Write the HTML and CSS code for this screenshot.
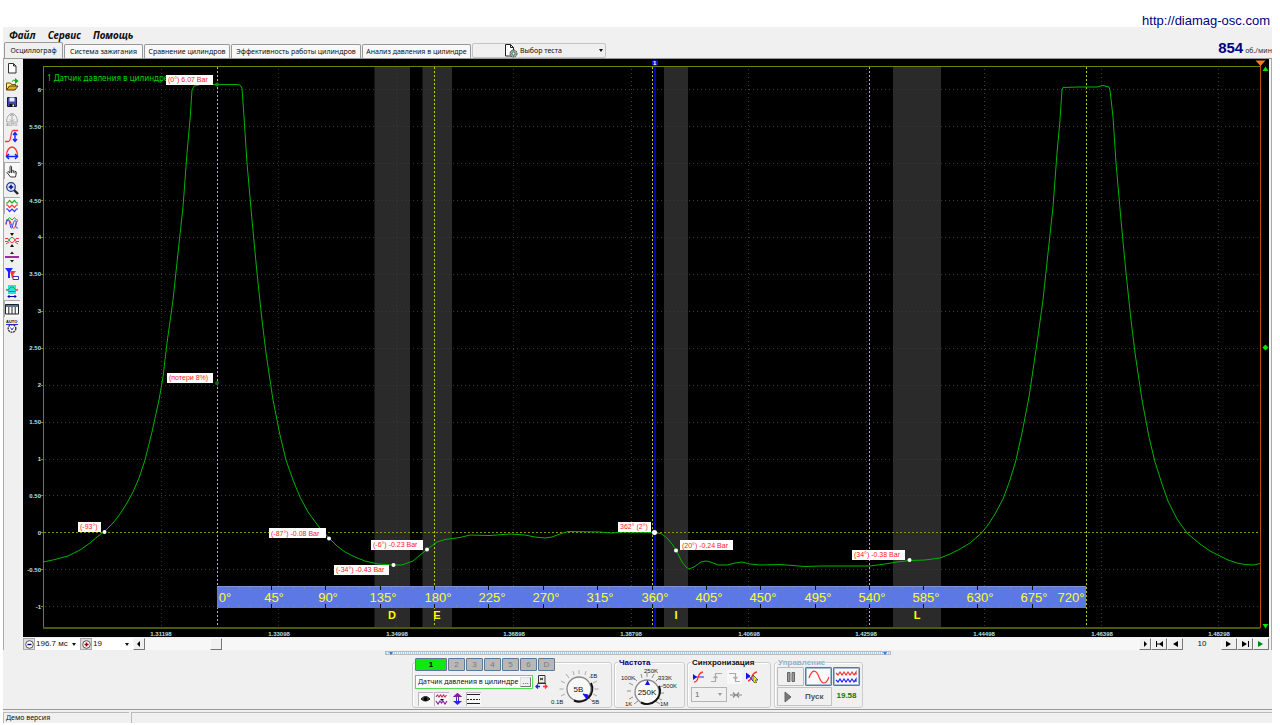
FILE: index.html
```html
<!DOCTYPE html>
<html lang="ru">
<head>
<meta charset="utf-8">
<title>Осциллограф</title>
<link rel="stylesheet" href="styles.css">
</head>
<body>
<header class="site"><a href="#">http://diamag-osc.com</a></header>
<div class="window">
  <nav class="menu">
    <button>Файл</button><button>Сервис</button><button>Помощь</button>
  </nav>
  <div class="tabs">
    <button class="tab tab-on">Осциллограф</button>
    <button class="tab tab-m">Система зажигания</button>
    <button class="tab tab-l">Сравнение цилиндров</button>
    <button class="tab tab-xxl">Эффективность работы цилиндров</button>
    <button class="tab tab-xl">Анализ давления в цилиндре</button>
    <button class="test-pick">
      <svg width="14" height="14" viewBox="0 0 14 14"><path d="M1.500 .5h5l3 3v8.500h-8zM6.500 .5v3h3" fill="#fff" stroke="#222"/><circle cx="9.500" cy="9.500" r="3.500" fill="#9db59d" stroke="#344" stroke-dasharray="1.500 .8"/><circle cx="9.500" cy="9.500" r="1.500" fill="#dfe" stroke="#344" stroke-width=".7"/></svg>
      <span>Выбор теста</span><i class="arrow"></i>
    </button>
    <div class="rpm"><b>854</b><span>об./мин</span></div>
  </div>

  <div class="main">
    <div class="toolbar">
      <button aria-label="Новый"><svg viewBox="0 0 14 14"><path d="M3.500 2.500h5l2.500 2.500v7h-7.500zM8.500 2.500v2.500h2.500" fill="#fff" stroke="#333"/></svg></button>
      <button aria-label="Открыть"><svg viewBox="0 0 14 14"><path d="M1.500 12V5h4l1 1.500h4V8" fill="#ffe98a" stroke="#6a5200"/><path d="M1.500 12l3-4h8.500l-3 4z" fill="#e8b020" stroke="#4a3a00"/><path d="M7 3.500q1.500-2 3-1" fill="none" stroke="#0a0"/><path d="M10 0l3.500 3-3.500 3z" fill="#0a0"/></svg></button>
      <button aria-label="Сохранить"><svg viewBox="0 0 14 14"><path d="M2.500 2.500h9v9h-9z" fill="#4048a8" stroke="#181850"/><path d="M4.500 2.500h5v4h-5z" fill="#e8eefc"/><path d="M4.500 9h5v3h-5z" fill="#111"/><path d="M7.500 9.500h1.500v2h-1.500z" fill="#fff"/></svg></button>
      <button aria-label="Авто"><svg viewBox="0 0 14 14"><path d="M1.500 10a5.500 8.500 0 0 1 11 0zM7 2v7M5 4l2-2 2 2M5 7.500l2 2 2-2" fill="none" stroke="#aaa"/><text x="1" y="14" class="tiny" fill="#999">AUTO</text></svg></button>
      <button aria-label="Амплитуда"><svg viewBox="0 0 14 14"><path d="M0 12.500h3c4 0 2-10 5-11h5" fill="none" stroke="#f33" stroke-width="1.300"/><path d="M10 4v8M8 6l2-2.500L12 6M8 10l2 2.500 2-2.500" fill="none" stroke="#12f" stroke-width="1.400"/></svg></button>
      <button aria-label="Период"><svg viewBox="0 0 14 14"><path d="M1.500 10C1.500 4 4.500 1 7 1S12.500 4 12.500 10" fill="none" stroke="#f33" stroke-width="1.300"/><path d="M2 10.500h10M4 8l-2.500 2.500L4 13M10 8l2.500 2.500L10 13" fill="none" stroke="#12f" stroke-width="1.400"/></svg></button>
      <button class="on" aria-label="Рука"><svg viewBox="0 0 14 14"><path d="M5.500 13L2 8.500l1-1 2 1.500V2.500q.7-1 1.500 0V7q.8-1.500 1.700 0 .8-1 1.700.5 1.300-.5 1.500 1L10.500 13zM6.500 7v2M8.200 7v2M10 7.500v2" fill="#fff" stroke="#222" stroke-width=".9"/></svg></button>
      <button aria-label="Лупа"><svg viewBox="0 0 14 14"><path d="M9 9l4 4" stroke="#222" stroke-width="2.400"/><circle cx="6" cy="6" r="4.300" fill="#d8e8ff" stroke="#223a70" stroke-width="1.200"/><path d="M3.800 6h4.400M6 3.800v4.400" stroke="#00a" stroke-width="1.500"/></svg></button>
      <button class="on" aria-label="Все каналы"><svg viewBox="0 0 14 14"><g fill="none" stroke-width="1.200"><path d="M1 4h1.500l2-2.500L7 4l2.500-2.500L11.500 4H13" stroke="#2a2"/><path d="M1 6h1.500l2 2.500L7 6l2.500 2.500 2-2.500H13" stroke="#f33"/><path d="M1 10h1.500l2 2.500L7 10l2.500 2.500 2-2.500H13" stroke="#33f"/></g></svg></button>
      <button aria-label="Наложение"><svg viewBox="0 0 14 14"><g fill="none"><path d="M1 4h1.500l2-2.500L7 4l2.500-2.500L11.500 4H13" stroke="#2a2"/><path d="M1 9C2 3 4 2 5.500 6s3 9 4.500 5 1-6 3-6" stroke="#f33"/><path d="M1 8c0-5 3-6 4 0s2 5 3 0 4-4 3 0 1 4 2 4" stroke="#33f"/></g></svg></button>
      <button aria-label="Сжатие"><svg viewBox="0 0 14 14"><g fill="none"><path d="M0 8.500h3l3-4h2l3 4h3" stroke="#2a2"/><path d="M0 5.500h3l3 4h2l3-4h3M1 11l3-2M13 11l-3-2" stroke="#f33"/></g><path d="M5 0h4L7 3zM5 14h4l-2-3z" fill="#111"/></svg></button>
      <button aria-label="Ноль"><svg viewBox="0 0 14 14"><path d="M0 6h14v2H0z" fill="#a02aa0"/><path d="M5 4h4L7 1.500zM5 10h4l-2 2.500z" fill="#222"/></svg></button>
      <button aria-label="Фильтр"><svg viewBox="0 0 14 14"><path d="M0 1h8L5 5v6H3V5z" fill="#22f"/><path d="M5 4h6L8.500 7v4H7z" fill="#f33"/><path d="M8 9.500h5.500v3H8z" fill="#fff" stroke="#33a"/></svg></button>
      <button aria-label="Подсветка"><svg viewBox="0 0 14 14"><path d="M3 1h8v9H3z" fill="#2de0e0"/><path d="M1 6h2l3-3h2l3 3h2" fill="none" stroke="#2a2"/><path d="M1 5l3 2.500h6L13 5" fill="none" stroke="#f33"/><path d="M3 12.500h8M4.500 11L3 12.500 4.500 14M9.500 11l1.500 1.500L9.500 14" fill="none" stroke="#00a"/></svg></button>
      <button class="on" aria-label="Таблица"><svg viewBox="0 0 14 14"><path d="M.5 2.500h13v9.500H.5zM3.800 3v9M7 3v9M10.200 3v9" fill="#fff" stroke="#222"/><path d="M1 3h12v2H1z" fill="#579"/></svg></button>
      <button aria-label="Автонастройка"><svg viewBox="0 0 14 14"><text x="1" y="4" class="tiny" fill="#111">AUTO</text><path d="M1 5.500h12" stroke="#22f"/><circle cx="7" cy="9.500" r="3.800" fill="#fff" stroke="#333" stroke-width="1.400" stroke-dasharray="2 .7"/><path d="M5.500 8.500L7 11l1.500-2.500" fill="none" stroke="#22f"/></svg></button>
    </div>

    <div class="scope">
      <svg class="chart" viewBox="23 59 1246 578">
        <rect x="23" y="59" width="1246" height="578" fill="#000"/>
        <path d="M374.500 67H410V628H374.500zM422.500 67H452V628H422.500zM664 67H688V628H664zM893 67H941V628H893z" fill="#2a2a2a"/>
        <path class="grid" d="M45 89.500H1260M45 126.500H1260M45 163.500H1260M45 200.500H1260M45 237.500H1260M45 274.500H1260M45 311.500H1260M45 348.500H1260M45 385.500H1260M45 422.500H1260M45 459.500H1260M45 495.500H1260M45 569.500H1260M45 606.500H1260"/>
        <path class="grid" d="M161.500 69V628M278.500 69V628M396.500 69V628M513.500 69V628M631.500 69V628M748.500 69V628M866.500 69V628M984.500 69V628M1101.500 69V628M1218.500 69V628"/>
        <path d="M44 532.500H1260" stroke="#8a9a00" stroke-dasharray="2 2"/>
        <path d="M217.500 67V628M434.500 67V628M652.500 67V628M869.500 67V628M1086.500 67V628" stroke="#c8c800" stroke-dasharray="2 2"/>
        <path d="M655 64V628" stroke="#0000c0" stroke-width="2"/>
        <path d="M43 66.500H1260M43.500 66V628" stroke="#6e8400" fill="none"/>
        <path d="M41 89.500h3M41 126.500h3M41 163.500h3M41 200.500h3M41 237.500h3M41 274.500h3M41 311.500h3M41 348.500h3M41 385.500h3M41 422.500h3M41 459.500h3M41 495.500h3M41 532.500h3M41 569.500h3M41 606.500h3" stroke="#6e8400"/>
        <path d="M43 628H1260" stroke="#4c5a00" stroke-width="2"/>
        <path d="M1260.500 64V628" stroke="#b84e00"/>
        <path d="M1255.500 60.500h10l-5 5.500z" fill="#ff7a20"/>
        <path d="M652 60.500h6v4l-3 2-3-2z" fill="#1010e0"/>
        <text x="653" y="65" class="mark">1</text>
        <path d="M1262.500 71h6l-3-4.500zM1262.500 624h6l-3 4.500zM1262.500 347.500l3-3 3 3-3 3z" fill="#00e400"/>

        <text x="47" y="81" class="title">1 Датчик давления в цилиндре</text>
        <g class="axis" text-anchor="end">
          <text x="41" y="92">6</text><text x="41" y="129">5.50</text><text x="41" y="166">5</text><text x="41" y="203">4.50</text><text x="41" y="239">4</text><text x="41" y="276">3.50</text><text x="41" y="313">3</text><text x="41" y="350">2.50</text><text x="41" y="387">2</text><text x="41" y="424">1.50</text><text x="41" y="461">1</text><text x="41" y="498">0.50</text><text x="41" y="535">0</text><text x="41" y="572">-0.50</text><text x="41" y="609">-1</text>
        </g>
        <g class="axis" text-anchor="middle">
          <text x="161" y="636">1.31198</text><text x="279" y="636">1.33098</text><text x="397" y="636">1.34998</text><text x="514" y="636">1.36898</text><text x="631" y="636">1.38798</text><text x="749" y="636">1.40698</text><text x="866" y="636">1.42598</text><text x="984" y="636">1.44498</text><text x="1102" y="636">1.46398</text><text x="1219" y="636">1.48298</text>
        </g>

        <polyline class="wave" points="43,562 55,559.500 68,556 80,550 90,543 97,537 105,531 113,523 120,514 127,503 133,492 139,478 145,460 152,432 159,400 163,377 167,343 173,300 178,253 183,207 187,153 190,120 192,90 194,86 197,85.500 200,84.500 237,84.500 240,85 242,88 244,117 247,163 252,220 257,273 262,320 266,353 273,400 280,435 286,460 293,480 300,497 308,512 319,527 329,538 337,546 345,552 355,557 365,561 378,564 393,565 402,565 413,561 420,555 427,549.500 437,542 445,539.500 460,537.500 470,535 490,535.500 510,534 525,535 535,537 545,538 552,537 560,534 568,531.500 600,532 612,533 622,532 655,532.500 662,534 668,539 672,544 676,550 682,562 686,567 689,569 694,567 701,562 706,561 712,562.500 718,565 727,565 735,563 742,562 750,564 760,565 780,564.500 805,566.500 820,566 870,566 885,564 897,562 910,560.500 925,560 940,558 950,554 960,549 970,543 982,532.500 988,525 995,514 1003,499 1010,480 1016,460 1022,433 1029,397 1033,370 1037,343 1043,300 1048,253 1053,207 1057,153 1060,120 1062,90 1063,87.500 1078,87 1097,87 1103,85.500 1109,87 1110,90 1113,117 1116,163 1121,220 1126,273 1131,320 1135,353 1142,400 1149,437 1155,462 1162,484 1168,501 1177,519 1187,533 1200,544 1210,551 1218,555 1228,560 1237,563 1245,564.500 1254,565 1260,563.500"/>

        <rect x="217" y="586" width="869" height="22" fill="#5b78e4"/>
        <path d="M217 586.500H1086" stroke="#7f93d8"/>
        <path d="M217 588H1086M217 606H1086" stroke="#8a8a8a" stroke-width="2" stroke-dasharray="1 9.866"/>
        <path d="M271.500 586v4m0 14v4M325.500 586v4m0 14v4M380.500 586v4m0 14v4M434.500 586v4m0 14v4M488.500 586v4m0 14v4M543.500 586v4m0 14v4M597.500 586v4m0 14v4M652.500 586v4m0 14v4M706.500 586v4m0 14v4M760.500 586v4m0 14v4M815.500 586v4m0 14v4M869.500 586v4m0 14v4M923.500 586v4m0 14v4M977.500 586v4m0 14v4M1032.500 586v4m0 14v4" stroke="#111"/>
        <g class="deg" text-anchor="middle">
          <text x="225" y="602">0°</text><text x="274" y="602">45°</text><text x="328" y="602">90°</text><text x="383" y="602">135°</text><text x="438" y="602">180°</text><text x="492" y="602">225°</text><text x="546" y="602">270°</text><text x="600" y="602">315°</text><text x="655" y="602">360°</text><text x="709" y="602">405°</text><text x="763" y="602">450°</text><text x="818" y="602">495°</text><text x="872" y="602">540°</text><text x="926" y="602">585°</text><text x="980" y="602">630°</text><text x="1034" y="602">675°</text><text x="1071" y="602">720°</text>
        </g>
        <g class="zone" text-anchor="middle"><text x="392" y="619">D</text><text x="437" y="619">E</text><text x="676" y="619">I</text><text x="917" y="619">L</text></g>

        <path d="M166 75h47v10h-47zM167 373h46v10h-46zM78 522h23v10h-23zM269 528h57v10h-57zM371 540h52v10h-52zM334 565h55v10h-55zM618 522h33v10h-33zM680 540h53v10h-53zM852 550h53v10h-53z" fill="#fff"/>
        <g class="note">
          <text x="168" y="82">(0°) 6.07 Bar</text><text x="169" y="380">(потери 8%)</text><text x="80" y="529">(-93°)</text><text x="271" y="536">(-87°) -0.08 Bar</text><text x="373" y="547">(-6°) -0.23 Bar</text><text x="336" y="572">(-34°) -0.43 Bar</text><text x="620" y="529">362° (2°)</text><text x="682" y="548">(20°) -0.24 Bar</text><text x="854" y="557">(34°) -0.38 Bar</text>
        </g>
        <g fill="#fff"><circle cx="104.500" cy="532" r="2"/><circle cx="329" cy="538.500" r="2"/><circle cx="393.500" cy="565" r="2"/><circle cx="427" cy="549.500" r="2"/><circle cx="654.500" cy="532.500" r="2.500"/><circle cx="676" cy="550.500" r="2"/><circle cx="909.500" cy="560" r="2"/></g>
        <circle cx="217" cy="84.500" r="2" fill="#008a00"/><circle cx="217" cy="383" r="2" fill="#006a00"/>
      </svg>

      <div class="timebar">
        <button class="zoom-btn" aria-label="Уменьшить"><svg width="9" height="9" viewBox="0 0 9 9"><circle cx="4.500" cy="4.500" r="3.800" fill="#fff" stroke="#333" stroke-width=".8"/><path d="M2.500 4.500h4" stroke="#006" stroke-width="1.400"/></svg></button>
        <label class="pick pick-a"><select aria-label="Развёртка"><option>196.7 мс</option></select><i class="arrow"></i></label>
        <button class="zoom-btn" aria-label="Увеличить"><svg width="9" height="9" viewBox="0 0 9 9"><circle cx="4.500" cy="4.500" r="3.800" fill="#fff" stroke="#333" stroke-width=".8"/><path d="M2.500 4.500h4M4.500 2.500v4" stroke="#900" stroke-width="1.400"/></svg></button>
        <label class="pick pick-b"><select aria-label="Масштаб"><option>19</option></select><i class="arrow"></i></label>
        <button class="step" aria-label="Влево"><svg width="8" height="8" viewBox="0 0 8 8"><path d="M5 1v6L2 4z"/></svg></button>
        <div class="track"><button class="thumb" aria-label="Ползунок"></button></div>
        <button class="step" aria-label="Вправо"><svg width="8" height="8" viewBox="0 0 8 8"><path d="M3 1v6l3-3z"/></svg></button>
        <button class="nav" aria-label="В начало"><svg width="9" height="8" viewBox="0 0 9 8"><path d="M1 1h1v6H1zM8 1v6L4 4zM2 3.500h4v1H2z"/></svg></button>
        <button class="nav" aria-label="Назад"><svg width="8" height="8" viewBox="0 0 8 8"><path d="M7 1v6L2 4z"/></svg></button>
        <input class="frame" aria-label="Кадр" value="10">
        <button class="nav" aria-label="Вперёд"><svg width="8" height="8" viewBox="0 0 8 8"><path d="M1 1v6l5-3z"/></svg></button>
        <button class="nav" aria-label="В конец"><svg width="9" height="8" viewBox="0 0 9 8"><path d="M7 1h1v6H7zM1 1v6l5-3z"/></svg></button>
        <button class="nav" aria-label="Пуск кадров"><svg width="8" height="8" viewBox="0 0 8 8"><path d="M1 1v6l5-3z" fill="#080"/></svg></button>
      </div>
    </div>
  </div>

  <div class="splitter"><i class="arrow arrow-blue"></i><i class="arrow arrow-blue"></i></div>

  <div class="panels">
    <section class="group g-channel">
      <div class="ch-col">
        <div class="channels"><button class="ch ch-on">1</button><button class="ch">2</button><button class="ch">3</button><button class="ch">4</button><button class="ch">5</button><button class="ch">6</button><button class="ch">D</button></div>
        <div class="sensor-row">
          <div class="sensor"><input aria-label="Датчик" value="Датчик давления в цилиндре"><button>...</button></div>
          <svg width="13" height="14" viewBox="0 0 13 14"><path d="M3.500 .5h6.500v7.500h-6.500zM5 3l3 2M5 5l3-2M2.500 8.500h8.500" fill="none" stroke="#333"/><path d="M1 11.500h4M3 9.500l-2 2 2 2" fill="none" stroke="#22c" stroke-width="1.300"/><path d="M8 11.500h4M10 9.500l2 2-2 2" fill="none" stroke="#f33" stroke-width="1.300"/></svg>
        </div>
        <div class="tools">
          <button class="on" aria-label="Видимость"><svg width="13" height="12" viewBox="0 0 13 12"><path d="M2 6q4.500-5 9 0-4.500 4-9 0z" fill="#555" stroke="#111"/><circle cx="6.500" cy="6" r="2" fill="#000"/></svg></button>
          <button class="on" aria-label="Инверсия"><svg width="13" height="12" viewBox="0 0 13 12"><path d="M1 4l1.500-2L4 4l1.500-2L7 4l1.500-2L10 4l1.500-2" fill="none" stroke="#c03060" stroke-width="1.200"/><path d="M1 8l2 3 2-3 1.500 2L8 8l2 3 2-3" fill="none" stroke="#8020a0" stroke-width="1.200"/><path d="M5 6h4L7 8z"/></svg></button>
          <button aria-label="Масштаб по вертикали"><svg width="13" height="12" viewBox="0 0 13 12"><path d="M6.500 0L11 4H8v4h3l-4.500 4L2 8h3V4H2z" fill="#22f"/><path d="M6.500 0L11 4H8v2H5V4H2z" fill="#80209a"/><path d="M6.500 4v4" stroke="#fff"/></svg></button>
          <button class="on" aria-label="Уровни"><svg width="13" height="12" viewBox="0 0 13 12"><path d="M0 1.500h13M0 10.500h13" stroke="#222"/><path d="M0 6.500h13" stroke="#222" stroke-dasharray="2 1"/></svg></button>
        </div>
      </div>
      <svg class="knob" width="54" height="48" viewBox="550 659 54 48">
        <path d="M566 695l-4 2M564.500 690h-4M566 684l-4-2M570 679l-3-4M575 676l-1-4M580 675v-4M586 676l1-4M590 679l4-4M594 684l4-2M595.500 690h4M594 695l4 2M590 699l4 4" stroke="#999" stroke-width=".8"/>
        <circle cx="580" cy="690" r="12" fill="#f8f8f8" stroke="#888" stroke-width="1.300"/><path d="M592 684a13 13 0 0 1-17 17.500" fill="none" stroke="#111" stroke-width="2"/><path d="M584 695l5 1-1 4z" fill="#11e" stroke="#11e"/>
        <text x="579.500" y="693" text-anchor="middle" class="kval">5В</text><text x="591" y="679" class="klab">1В</text><text x="593" y="705" class="klab">5В</text><text x="552" y="705" class="klab">0.1В</text>
      </svg>
    </section>
    <section class="group g-freq">
      <h2 class="navy">Частота</h2>
      <svg width="62" height="42" viewBox="619 666 62 42">
        <path d="M634 696l-4 2M632 690h-4M634 684l-4-2M638 680l-3-3M643 677l-1-4M648 676v-4M653 677l2-4M657 680l3-3M660 686l4-1M661 692h4M659 697l4 2M656 700l5 3M639 700l-4 3" stroke="#777" stroke-width=".8"/>
        <circle cx="648" cy="691" r="12" fill="#f8f8f8" stroke="#888" stroke-width="1.300"/><path d="M660 685a13 13 0 0 1-18 16.500" fill="none" stroke="#111" stroke-width="2"/><path d="M646 684h5l-2.500-5z" fill="#11e"/>
        <text x="648" y="694" text-anchor="middle" class="kval">250K</text><text x="645" y="672" class="klab">250K</text><text x="622" y="679" class="klab">100K</text><text x="659" y="679" class="klab">333K</text><text x="664" y="687" class="klab">500K</text><text x="626" y="705" class="klab">1K</text><text x="661" y="705" class="klab">1M</text>
      </svg>
    </section>
    <section class="group g-sync">
      <h2>Синхронизация</h2>
      <div class="row">
        <button class="flat" aria-label="Уровень"><svg width="13" height="12" viewBox="0 0 13 12"><path d="M1 6h11" stroke="#22f"/><path d="M2 11c6 0 2-9 9-10" fill="none" stroke="#f33" stroke-width="1.300"/><path d="M1 3v6l4-3z" fill="#11e"/></svg></button>
        <button class="flat" aria-label="Фронт"><svg width="13" height="12" viewBox="0 0 13 12"><path d="M1 10.500h4.500v-8H12M3.500 7l2-2 2 2" fill="none" stroke="#aaa" stroke-width="1.200"/></svg></button>
        <button class="flat pale" aria-label="Спад"><svg width="13" height="12" viewBox="0 0 13 12"><path d="M1 2.500h6.500v8H12M5.500 6l2 2 2-2" fill="none" stroke="#aaa" stroke-width="1.200"/></svg></button>
        <button class="flat" aria-label="Выбор уровня"><svg width="13" height="12" viewBox="0 0 13 12"><path d="M2 10c5 0 2-8 9-9" fill="none" stroke="#f33" stroke-width="1.300"/><path d="M0 2v6l4-3zM3 5l4 5" fill="#11e" stroke="#11e"/><path d="M7 4l5 5H9.500l1 3H8.500L7 9.500z" fill="#ee2" stroke="#332" stroke-width=".7"/></svg></button>
      </div>
      <div class="row">
        <label class="sync-pick"><select aria-label="Канал синхронизации"><option>1</option></select><i class="arrow"></i></label>
        <svg width="12" height="10" viewBox="0 0 12 10"><path d="M0 5h5M3 2.500L5.500 5 3 7.500M12 5H7M9 2.500L6.500 5 9 7.500" fill="none" stroke="#888" stroke-width="1.200"/></svg>
      </div>
    </section>
    <section class="group g-run">
      <h2 class="pale-blue">Управление</h2>
      <div class="row">
        <button class="big" aria-label="Пауза"><svg width="10" height="12" viewBox="0 0 10 12"><path d="M1.500 1.500h2.500v9H1.500zM6 1.500h2.500v9H6z" fill="#999" stroke="#666"/></svg></button>
        <button class="big blue" aria-label="Сигнал"><svg width="22" height="14" viewBox="0 0 22 14"><path d="M1 8C4-1 8-1 11 7s7 8 10 0" fill="none" stroke="#f33" stroke-width="1.200"/></svg></button>
        <button class="big blue" aria-label="Сигналы"><svg width="24" height="14" viewBox="0 0 24 14"><path d="M1 3l2 2 2-3 2 3 2-3 2 3 2-3 2 3 2-3 2 3 2-3v3" fill="none" stroke="#f33" stroke-width="1.200"/><path d="M1 10l2 2 2-3 2 3 2-3 2 3 2-3 2 3 2-3 2 3 2-3v3" fill="none" stroke="#22f" stroke-width="1.200"/></svg></button>
      </div>
      <div class="row">
        <button class="start"><svg width="9" height="12" viewBox="0 0 9 12"><path d="M1 1v10l6-5z" fill="#777" stroke="#666"/></svg><span>Пуск</span></button>
        <output>19.58</output>
      </div>
    </section>
  </div>
  <footer class="status"><span class="s-ver">Демо версия</span><span class="s-msg"></span></footer>
</div>
</body>
</html>
```

FILE: styles.css
```css
* { box-sizing: border-box; }
body { margin: 0; background: #fff; font: 8px/10px "Liberation Sans", Arial, sans-serif; color: #111; }
button, input, select { font: inherit; color: inherit; margin: 0; padding: 0; border: 0; background: none; border-radius: 0; }
select { appearance: none; width: 100%; }
svg { display: block; flex: none; }
h2 { margin: 0; }

.site { height: 27px; padding: 13px 10px 0 0; text-align: right; position: relative; z-index: 1; }
.site a { font-size: 13px; line-height: 16px; color: #000080; text-decoration: none; }

.window { margin: 0 8px 3px 3px; background: #f0f0f0; }
.menu { display: flex; gap: 12px; height: 16px; padding-left: 6px; align-items: center; }
.menu button { font: italic bold 10px/14px "Noto Sans", sans-serif; }

.tabs { display: flex; height: 16px; align-items: flex-end; border-bottom: 1px solid #999; padding-left: 1px; font: 7px/10px "Noto Sans", sans-serif; }
.tab { height: 14px; margin-right: 1px; background: #f8f8f8; border: 1px solid #999; border-bottom: 0; border-radius: 2px 2px 0 0; white-space: nowrap; }
.tab-on { width: 59px; height: 16px; background: #f0f0f0; }
.tab-m { width: 79px; }
.tab-l { width: 86px; }
.tab-xxl { width: 130px; }
.tab-xl { width: 109px; }
.test-pick { display: flex; align-items: center; gap: 2px; width: 134px; height: 15px; padding: 0 2px 0 31px; border: 1px solid #c4c4c4; border-radius: 2px; white-space: nowrap; }
.arrow { width: 0; height: 0; border: 2px solid transparent; border-top: 3px solid #111; border-bottom: 0; flex: none; }
.test-pick .arrow { margin-left: auto; }
.rpm { margin-left: auto; display: flex; align-items: baseline; gap: 2px; line-height: 15px; color: #333; white-space: nowrap; }
.rpm b { font: bold 15px/15px "Liberation Sans", Arial, sans-serif; color: #000080; }

.main { display: flex; padding-right: 2px; border-left: 1px solid #aaa; border-right: 1px solid #aaa; }
.toolbar { width: 19px; flex: none; display: flex; flex-direction: column; padding-right: 3px; }
.toolbar button { height: 17px; display: flex; align-items: center; justify-content: center; }
.toolbar svg { width: 14px; height: 14px; }
.toolbar .on { margin-top: 1px; background: #f8f8f8; box-shadow: inset 1px 1px #aaa; }
.tiny { font: bold 4px "Liberation Sans", sans-serif; }

.scope { flex: 1; min-width: 0; }
.chart { width: 100%; height: auto; font-family: "Liberation Sans", Arial, sans-serif; }
.grid { stroke: #3a3a3a; stroke-dasharray: 1 3; }
.wave { fill: none; stroke: #00b400; stroke-width: 1; }
.title { font: 8px "Noto Sans", sans-serif; fill: #00d800; }
.axis { font-size: 6px; font-weight: bold; fill: #b4e0e0; }
.mark { font-size: 6px; font-weight: bold; fill: #fff; }
.deg { font-size: 13px; fill: #ffff20; }
.zone { font-size: 11px; font-weight: bold; fill: #ff0; }
.note { font-size: 7px; fill: #ff2020; }

.timebar { display: flex; height: 13px; align-items: stretch; background: #f0f0f0; padding-top: 1px; }
.zoom-btn { width: 12px; display: grid; place-items: center; background: #ddd; border: 1px solid #aaa; }
.pick { display: flex; align-items: center; background: #fff; padding: 0 4px 0 1px; }
.pick-a { width: 45px; }
.pick-b { width: 41px; }
.step, .nav, .thumb { display: grid; place-items: center; background: #f0f0f0; border: 1px solid #f8f8f8; border-right-color: #777; border-bottom-color: #777; }
.step { width: 12px; }
.nav { width: 16px; }
.track { flex: 1; background: #f7f7f7; padding-left: 65px; }
.thumb { width: 12px; height: 12px; }
.frame { width: 38px; text-align: center; }

.splitter { width: 506px; max-width: 100%; height: 4px; margin: 1px auto 3px; display: flex; justify-content: space-between; padding: 0 3px; border: 1px solid #bbb; background: repeating-linear-gradient(90deg, #a8d4f8 0 1px, #e8f4ff 1px 2px); }
.arrow-blue { border-top-color: #2080e0; }

.panels { display: flex; justify-content: center; gap: 2px; height: 50px; }
.group { position: relative; padding: 0 4px; }
.group::before { content: ""; position: absolute; inset: 4px 0 0; border: 1px solid #ccc; border-radius: 3px; box-shadow: inset 1px 1px #fff; pointer-events: none; }
.group > * { position: relative; }
.group h2 { width: max-content; padding: 0 1px; background: #f0f0f0; font-size: 8px; line-height: 9px; }
.group .navy { color: #000080; }
.group .pale-blue { color: #8fb0cc; }
.g-channel { width: 200px; display: flex; padding: 0 0 0 3px; }
.ch-col { width: 134px; }
.g-freq { width: 71px; }
.g-sync { width: 84px; }
.g-run { width: 89px; margin-left: 1px; padding: 0 3px; }
.row { display: flex; align-items: center; gap: 3px; }

.channels { display: flex; gap: 1px; width: max-content; background: #f0f0f0; }
.ch { width: 17px; height: 13px; background: #b8b8b8; border: 1px solid #5a7a98; border-radius: 1px; color: #737b83; flex: none; }
.ch-on { width: 32px; background: #10e810; color: #000; font-weight: bold; }
.sensor-row { display: flex; gap: 2px; margin-top: 4px; }
.sensor { display: flex; flex: none; width: 118px; height: 14px; border: 1px solid #50e050; background: #fff; padding: 1px; }
.sensor input { flex: 1; min-width: 0; padding-left: 1px; font: 7px/10px "Noto Sans", sans-serif; }
.sensor button { width: 11px; line-height: 4px; background: #f0f0f0; border: 1px solid #ddd; border-right-color: #777; border-bottom-color: #777; }
.tools { display: flex; gap: 1px; margin-top: 3px; padding-left: 3px; }
.tools button { width: 15px; height: 14px; display: grid; place-items: center; }
.tools .on { background: #f8f8f8; box-shadow: inset 1px 1px #bbb; }
.klab { font: 6px "Liberation Sans", sans-serif; fill: #222; }
.kval { font: 8px "Liberation Sans", sans-serif; fill: #111; }

.flat { width: 15px; height: 14px; display: grid; place-items: center; }
.pale { background: #f8f8f8; }
.g-sync .row { margin-top: 3px; }
.sync-pick { width: 36px; height: 15px; display: flex; align-items: center; border: 1px solid #b4b4b4; padding: 0 4px 0 3px; color: #666; }
.sync-pick .arrow { border-top-color: #999; }
.big { width: 27px; height: 19px; display: grid; place-items: center; border: 1px solid #bbb; border-radius: 1px; }
.g-run .row { gap: 1px; }
.big.blue { border: 1px solid #5a7a9c; box-shadow: inset 0 0 0 1px #a8bccf; background: #fafafa; }
.start { width: 55px; height: 19px; display: flex; align-items: center; gap: 12px; padding-left: 6px; border: 1px solid #c4c4c4; color: #555; font-weight: bold; margin-top: 1px; }
.g-run output { flex: 1; text-align: center; color: #008000; font-weight: bold; }

.status { display: flex; gap: 2px; margin-top: 1px; height: 14px; border-top: 1px solid #999; padding-top: 2px; font: 7px/10px "Noto Sans", sans-serif; }
.status span { border: 1px solid #bbb; border-right: 0; border-bottom: 0; padding-left: 2px; }
.s-ver { width: 126px; }
.s-msg { flex: 1; }
```
